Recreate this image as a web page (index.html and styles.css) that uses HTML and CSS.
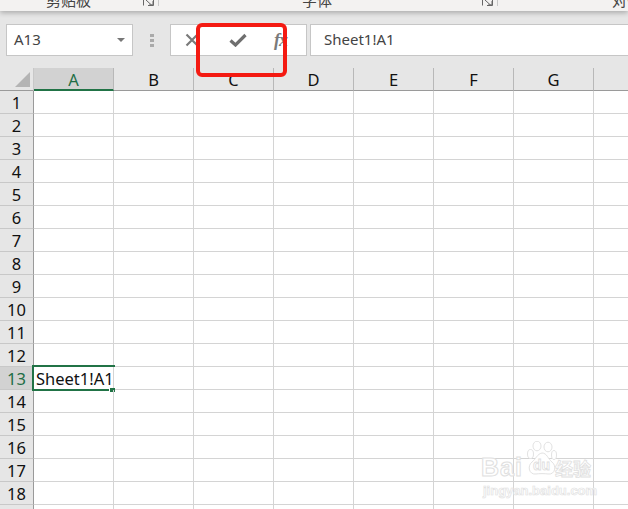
FILE: index.html
```html
<!DOCTYPE html>
<html lang="zh">
<head>
<meta charset="utf-8">
<title>Excel</title>
<link rel="stylesheet" href="styles.css">
</head>
<body>
<div class="app">
  <div class="ribbon">
    <div class="group g1"><span class="glabel">剪贴板</span><svg class="launch" width="11" height="6" viewBox="0 0 11 6"><path d="M0.5 0V5.5M10.5 0V5.5H5M3 0L9 5.5M6 5H10V1" fill="none" stroke="#666" stroke-width="1"/></svg></div>
    <div class="group g2"><span class="glabel">字体</span><svg class="launch" width="11" height="6" viewBox="0 0 11 6"><path d="M0.5 0V5.5M10.5 0V5.5H5M3 0L9 5.5M6 5H10V1" fill="none" stroke="#666" stroke-width="1"/></svg></div>
    <div class="group g3"><span class="glabel">对齐</span></div>
  </div>
  <div class="formula-bar">
    <div class="namebox"><span class="name-text">A13</span><svg width="8" height="4" viewBox="0 0 8 4"><path d="M0 0H8L4 4Z" fill="#777"/></svg></div>
    <div class="grip"><i></i><i></i><i></i></div>
    <div class="fxbox">
      <svg class="ico-x" width="14" height="14" viewBox="0 0 14 14"><path d="M1.5 1.5L12.5 12.5M12.5 1.5L1.5 12.5" stroke="#7a7a7a" stroke-width="2.2" fill="none"/></svg>
      <svg class="ico-check" width="18" height="14" viewBox="0 0 18 14"><path d="M1.5 7.5L6.5 12L16.5 2" stroke="#6f6f6f" stroke-width="3.2" fill="none"/></svg>
      <span class="ico-fx">fx</span>
    </div>
    <div class="formula-input">Sheet1!A1</div>
  </div>
  <div class="sheet">
    <div class="row head-row">
      <div class="corner"><svg width="15" height="15" viewBox="0 0 15 15"><path d="M15 0V15H0Z" fill="#b4b4b4"/></svg></div>
      <div class="col active-col">A</div><div class="col">B</div><div class="col">C</div><div class="col">D</div><div class="col">E</div><div class="col">F</div><div class="col">G</div><div class="col rest"></div>
    </div>
    <div class="row"><div class="rh">1</div><div class="cells"></div></div>
    <div class="row"><div class="rh">2</div><div class="cells"></div></div>
    <div class="row"><div class="rh">3</div><div class="cells"></div></div>
    <div class="row"><div class="rh">4</div><div class="cells"></div></div>
    <div class="row"><div class="rh">5</div><div class="cells"></div></div>
    <div class="row"><div class="rh">6</div><div class="cells"></div></div>
    <div class="row"><div class="rh">7</div><div class="cells"></div></div>
    <div class="row"><div class="rh">8</div><div class="cells"></div></div>
    <div class="row"><div class="rh">9</div><div class="cells"></div></div>
    <div class="row"><div class="rh">10</div><div class="cells"></div></div>
    <div class="row"><div class="rh">11</div><div class="cells"></div></div>
    <div class="row"><div class="rh">12</div><div class="cells"></div></div>
    <div class="row"><div class="rh active-rh">13</div><div class="cells"><div class="active-cell">Sheet1!A1<i class="handle"></i></div></div></div>
    <div class="row"><div class="rh">14</div><div class="cells"></div></div>
    <div class="row"><div class="rh">15</div><div class="cells"></div></div>
    <div class="row"><div class="rh">16</div><div class="cells"></div></div>
    <div class="row"><div class="rh">17</div><div class="cells"></div></div>
    <div class="row"><div class="rh">18</div><div class="cells"></div></div>
    <div class="row"><div class="rh"></div><div class="cells"></div></div>
  </div>
  <div class="red-box"></div>
  <div class="watermark">
    <svg class="paw" width="30" height="36" viewBox="0 0 30 36"><g fill="#fff" stroke="#e2e2e2" stroke-width="1"><ellipse cx="3.500" cy="13" rx="3" ry="4.500"/><ellipse cx="10" cy="5" rx="4" ry="4.800"/><ellipse cx="21" cy="6" rx="4" ry="4.800"/><ellipse cx="27" cy="14" rx="2.500" ry="4.500"/><path d="M15 12C10 13 9 18 5 21C0 25 2 34 9 33C12 32.500 18 32.500 21 33C28 34 30 25 25 21C21 18 20 12 15 12Z"/></g><text x="6" y="29" class="wm-du">du</text></svg>
    <div class="wm-bai">Bai</div>
    <div class="wm-cn">经验</div>
    <div class="wm-url">jingyan.baidu.com</div>
  </div>
</div>
</body>
</html>
```
FILE: styles.css
```css
* { box-sizing: border-box; }
html, body { margin: 0; padding: 0; }
body { width: 628px; height: 509px; overflow: hidden; background: #e6e6e6; font-family: "Noto Sans", "Noto Sans CJK SC", sans-serif; }
.app { position: relative; width: 628px; height: 509px; overflow: hidden; }

.ribbon { height: 11px; background: #f3f2f1; display: flex; overflow: hidden; box-shadow: 0 2px 5px rgba(0,0,0,.25); position: relative; }
.group { position: relative; height: 6px; display: flex; border-right: 1px solid #c8c8c8; flex: none; }
.g1 { width: 159px; }
.g2 { width: 339px; }
.g3 { flex: 1; border-right: 0; }
.glabel { position: absolute; top: -9px; font: 15px/18px "Noto Sans CJK SC", sans-serif; color: #444; white-space: nowrap; }
.g1 .glabel { left: 46px; }
.g2 .glabel { left: 143px; }
.g3 .glabel { left: 114px; }
.launch { position: absolute; right: 4px; top: 0; }

.formula-bar { height: 57px; padding: 13px 0 0 6px; display: flex; align-items: flex-start; background: #e6e6e6; }
.namebox { width: 127px; height: 32px; background: #fff; border: 1px solid #c6c6c6; display: flex; align-items: center; justify-content: space-between; padding: 0 7px; font-size: 15px; color: #444; }
.name-text { line-height: 28px; height: 28px; margin-top: -2px; }
.grip { width: 37px; height: 32px; display: flex; flex-direction: column; align-items: center; justify-content: center; gap: 2px; }
.grip i { width: 4px; height: 3px; background: #aaa; }
.fxbox { width: 137px; height: 32px; background: #fff; border: 1px solid #c6c6c6; display: flex; align-items: center; position: relative; margin-right: 3px; }
.ico-x { margin-left: 14px; flex: none; }
.ico-check { margin-left: 30px; flex: none; }
.ico-fx { margin-left: 27px; font: italic bold 18px "Liberation Serif", serif; color: #7a7a7a; letter-spacing: -1px; }
.formula-input { flex: 1; height: 32px; background: #fff; border: 1px solid #c6c6c6; border-right: 0; font-size: 15px; line-height: 28px; padding-left: 13px; color: #444; }

.sheet { background: #fff; }
.row { display: flex; height: 23px; }
.head-row { background: #e6e6e6; }
.corner { width: 34px; flex: none; border-right: 1px solid #c8c8c8; border-bottom: 1px solid #9a9a9a; display: flex; align-items: flex-end; justify-content: flex-end; padding: 0 3px 3px 0; }
.col { width: 80px; border-right: 1px solid #b8b8b8; border-bottom: 1px solid #9a9a9a; text-align: center; font-size: 16.500px; line-height: 24px; color: #111; flex: none; }
.col.rest { flex: 1; border-right: 0; }
.active-col { background: #d2d2d2; color: #1f6e46; border-bottom: 2px solid #217346; }
.rh { width: 34px; flex: none; background: #e6e6e6; border-right: 1px solid #9a9a9a; border-bottom: 1px solid #c8c8c8; text-align: center; font-size: 16.500px; line-height: 23px; color: #111; }
.active-rh { background: #d2d2d2; color: #1f6e46; }
.cells { flex: 1; position: relative; border-bottom: 1px solid #d4d4d4; background-image: repeating-linear-gradient(to right, transparent 0 79px, #d4d4d4 79px 80px); }
.active-cell { position: absolute; left: -2px; top: -2px; width: 83px; height: 26px; border: 2px solid #217346; border-right: 0; font-size: 16.500px; line-height: 24px; padding-left: 2px; color: #111; white-space: nowrap; }
.handle { position: absolute; right: 0; bottom: -3px; width: 6px; height: 4px; background: #217346; border-left: 1px solid #fff; }

.red-box { position: absolute; left: 196px; top: 23px; width: 91px; height: 54px; border: 4px solid #f41a12; border-radius: 6px; }

.watermark { position: absolute; left: 481px; top: 441px; width: 114px; height: 58px; }
.paw { position: absolute; left: 46px; top: 0; }
.wm-du { font: bold 14px "Liberation Sans", sans-serif; fill: #fff; stroke: #dedede; stroke-width: .8px; }
.wm-bai { position: absolute; left: 0; top: 12px; font: bold 25px/28px "Liberation Sans", sans-serif; letter-spacing: 1px; color: #fff; -webkit-text-stroke: 1px #e0e0e0; }
.wm-cn { position: absolute; left: 74px; top: 16px; font: bold 18px/22px "Noto Sans CJK SC", sans-serif; color: #fff; -webkit-text-stroke: .800px #e0e0e0; white-space: nowrap; }
.wm-url { position: absolute; left: 2px; top: 41px; font: bold 13px/17px "Liberation Sans", sans-serif; color: #fff; -webkit-text-stroke: .700px #e2e2e2; white-space: nowrap; }
```
